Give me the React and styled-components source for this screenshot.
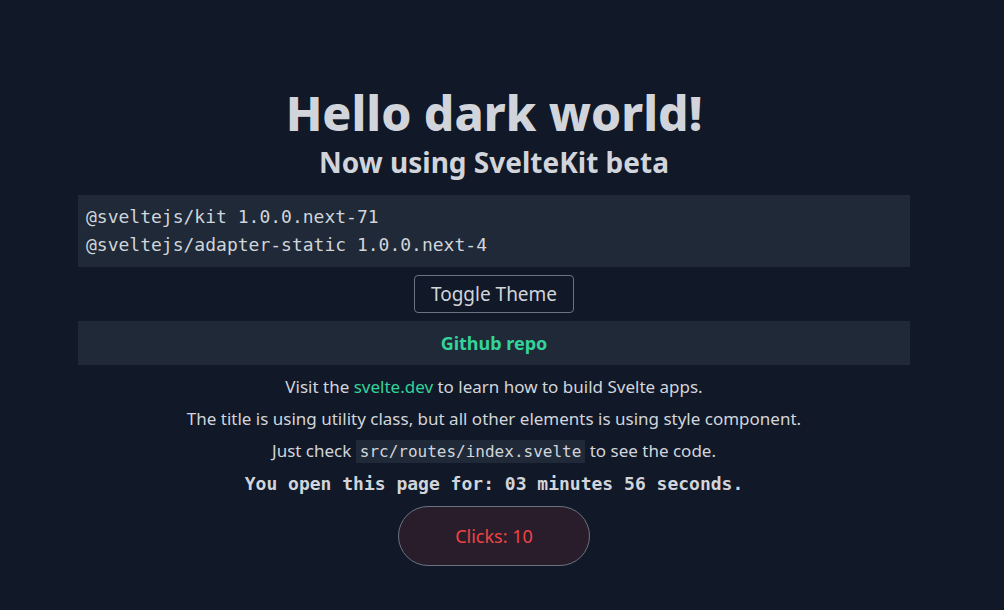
import React, { useState } from 'react';
import styled, { createGlobalStyle } from 'styled-components';

const GlobalStyle = createGlobalStyle`
  html, body {
    margin: 0;
    padding: 0;
    background: #111827;
  }
  body {
    font-family: "Noto Sans", "Open Sans", sans-serif;
    color: #d1d5db;
  }
`;

const Page = styled.main`
  min-height: 610px;
  box-sizing: border-box;
  padding: 84px 94px 40px 78px;
  display: flex;
  flex-direction: column;
  align-items: stretch;
  text-align: center;
`;

const Title = styled.h1`
  margin: 0;
  font-size: 48px;
  line-height: 58px;
  font-weight: 800;
  color: #d1d5db;
`;

const Subtitle = styled.h2`
  margin: 0 0 13px;
  font-size: 28px;
  line-height: 40px;
  font-weight: 700;
  color: #d1d5db;
`;

const CodeBox = styled.pre`
  margin: 0;
  padding: 8px;
  background: #1f2937;
  text-align: left;
  font-family: "DejaVu Sans Mono", "Liberation Mono", monospace;
  font-size: 18px;
  line-height: 28px;
  color: #d1d5db;
`;

const ToggleButton = styled.button`
  align-self: center;
  margin: 8px 0;
  height: 38px;
  padding: 0 16px;
  background: transparent;
  border: 1px solid #6b7280;
  border-radius: 4px;
  color: #d1d5db;
  font-family: "Noto Sans", "Open Sans", sans-serif;
  font-size: 19px;
  cursor: pointer;
`;

const RepoBar = styled.a`
  display: block;
  height: 44px;
  line-height: 44px;
  background: #1f2937;
  color: #34d399;
  font-weight: 700;
  font-size: 18px;
  text-decoration: none;
  margin-bottom: 6px;
`;

const Text = styled.p`
  margin: 0;
  font-size: 17px;
  line-height: 32px;
  color: #d1d5db;
`;

const Link = styled.a`
  color: #34d399;
  text-decoration: none;
`;

const InlineCode = styled.code`
  font-family: "DejaVu Sans Mono", "Liberation Mono", monospace;
  font-size: 16px;
  background: #1f2937;
  padding: 2px 4px;
`;

const Timer = styled.p`
  margin: 0;
  font-family: "DejaVu Sans Mono", "Liberation Mono", monospace;
  font-size: 18px;
  font-weight: 700;
  line-height: 32px;
  color: #d1d5db;
`;

const ClickButton = styled.button`
  align-self: center;
  margin-top: 6px;
  width: 192px;
  height: 60px;
  border-radius: 30px;
  border: 1px solid #6b7280;
  background: #2a1d2b;
  color: #ef4444;
  font-family: "Noto Sans", "Open Sans", sans-serif;
  font-size: 18px;
  cursor: pointer;
`;

const pad = (n) => String(n).padStart(2, '0');

const App = () => {
  const [clicks, setClicks] = useState(10);
  const seconds = 3 * 60 + 56;

  return (
    <>
      <GlobalStyle />
      <Page>
        <Title>Hello dark world!</Title>
        <Subtitle>Now using SvelteKit beta</Subtitle>
        <CodeBox>
          {'@sveltejs/kit 1.0.0.next-71\n@sveltejs/adapter-static 1.0.0.next-4'}
        </CodeBox>
        <ToggleButton>Toggle Theme</ToggleButton>
        <RepoBar href="#">Github repo</RepoBar>
        <Text>
          Visit the <Link href="#">svelte.dev</Link> to learn how to build Svelte apps.
        </Text>
        <Text>The title is using utility class, but all other elements is using style component.</Text>
        <Text>
          Just check <InlineCode>src/routes/index.svelte</InlineCode> to see the code.
        </Text>
        <Timer>
          You open this page for: {pad(Math.floor(seconds / 60))} minutes {pad(seconds % 60)} seconds.
        </Timer>
        <ClickButton onClick={() => setClicks(clicks + 1)}>Clicks: {clicks}</ClickButton>
      </Page>
    </>
  );
};

export default App;
